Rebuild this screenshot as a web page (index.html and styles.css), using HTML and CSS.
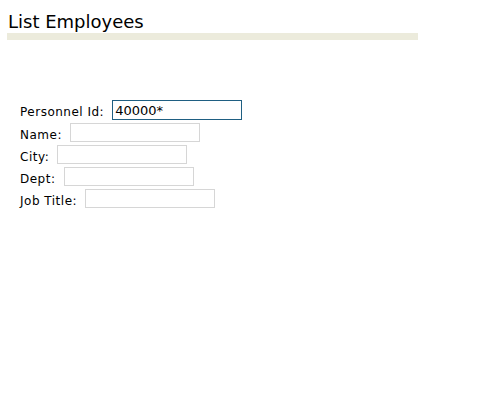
FILE: index.html
```html
<!DOCTYPE html>
<html>
<head>
<meta charset="utf-8">
<link rel="stylesheet" href="styles.css">
</head>
<body>
<h1 class="title">List Employees</h1>
<div class="bar"></div>
<form class="search">
  <div class="row"><label>Personnel Id:</label><input class="field focus" type="text" value="40000*"></div>
  <div class="row"><label>Name:</label><input class="field" type="text"></div>
  <div class="row"><label>City:</label><input class="field" type="text"></div>
  <div class="row"><label>Dept:</label><input class="field" type="text"></div>
  <div class="row"><label>Job Title:</label><input class="field" type="text"></div>
</form>
</body>
</html>
```
FILE: styles.css
```css
html, body { background: #ffffff; }
body {
  margin: 0;
  padding: 8px 7px;
  font-family: "DejaVu Sans", Verdana, sans-serif;
  color: #000;
}
.title {
  margin: 3px 0 0 1px;
  font-size: 18px;
  font-weight: normal;
  line-height: 22px;
}
.bar {
  width: 411px;
  height: 7px;
  background: #ecebdc;
}
.search {
  margin: 60px 0 0 13px;
  display: flex;
  flex-direction: column;
  gap: 3px;
}
.row {
  display: flex;
  align-items: center;
  gap: 8px;
  font-size: 12px;
  letter-spacing: 0.5px;
}
.row label {
  padding-top: 4px;
  line-height: 14px;
}
.field {
  box-sizing: border-box;
  width: 130px;
  height: 19px;
  margin: 0;
  padding: 0 2px;
  border: 1px solid #d6d6d6;
  font-family: "DejaVu Sans", Verdana, sans-serif;
  font-size: 13px;
  letter-spacing: 0;
  color: #000;
  background: #fff;
  outline: none;
}
.field.focus {
  height: 20px;
  border-color: #1f5f82;
}
```
